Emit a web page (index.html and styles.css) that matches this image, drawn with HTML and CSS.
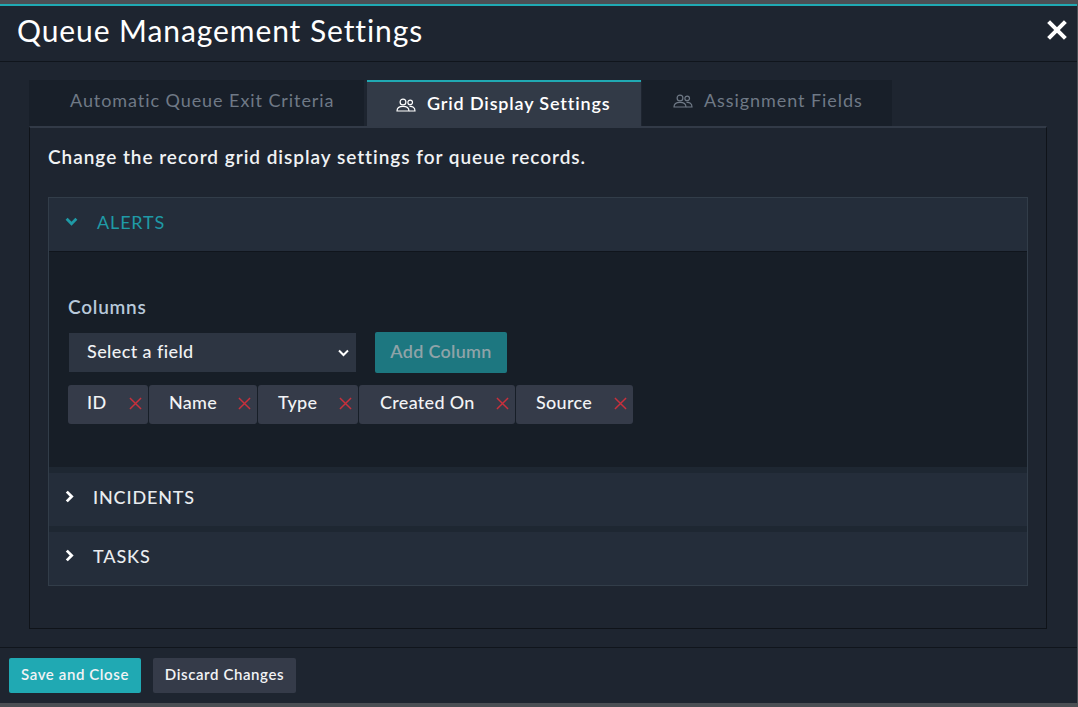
FILE: index.html

```html
<!DOCTYPE html>
<html lang="en">
<head>
    <meta charset="UTF-8">
    <title>Queue Management Settings</title>
    <link rel="stylesheet" href="styles.css">
</head>
<body>
    <div class="modal">
        <div class="modal_header">
            <h1>Queue Management Settings</h1>
            <svg class="close_icon" viewBox="0 0 20 20">
                <path d="M3 3 L17 17 M17 3 L3 17"/>
            </svg>
        </div>
        <div class="modal_body">
            <div class="tabs">
                <div class="tab tab_first">Automatic Queue Exit Criteria</div>
                <div class="tab tab_active">
                    <svg class="people_icon" viewBox="0 0 20 14">
                        <circle cx="7" cy="4" r="2.9"/>
                        <circle cx="14.2" cy="4.4" r="2.3"/>
                        <path d="M1 13 C1 9.5 3.5 8.4 7 8.4 C10.5 8.4 13 9.5 13 13 Z"/>
                        <path d="M13.5 8.4 C16.5 8.2 19 9.4 19 13 L13.2 13"/>
                    </svg>
                    Grid Display Settings
                </div>
                <div class="tab tab_last">
                    <svg class="people_icon" viewBox="0 0 20 14">
                        <circle cx="7" cy="4" r="2.9"/>
                        <circle cx="14.2" cy="4.4" r="2.3"/>
                        <path d="M1 13 C1 9.5 3.5 8.4 7 8.4 C10.5 8.4 13 9.5 13 13 Z"/>
                        <path d="M13.5 8.4 C16.5 8.2 19 9.4 19 13 L13.2 13"/>
                    </svg>
                    Assignment Fields
                </div>
            </div>
            <div class="tab_panel">
                <p class="intro">Change the record grid display settings for queue records.</p>
                <div class="accordion">
                    <div class="acc_head acc_open">
                        <svg class="chevron" viewBox="0 0 12 12"><path d="M1.5 3.5 L6 8 L10.5 3.5"/></svg>
                        ALERTS
                    </div>
                    <div class="acc_body">
                        <div class="field_label">Columns</div>
                        <div class="field_row">
                            <div class="select_box">
                                Select a field
                                <svg class="select_arrow" viewBox="0 0 12 8"><path d="M1.5 1.5 L6 6 L10.5 1.5"/></svg>
                            </div>
                            <button class="add_btn">Add Column</button>
                        </div>
                        <div class="chips">
                            <div class="chip chip_id">ID<svg class="remove" viewBox="0 0 14 14"><path d="M1 1 L13 13 M13 1 L1 13"/></svg></div>
                            <div class="chip chip_name">Name<svg class="remove" viewBox="0 0 14 14"><path d="M1 1 L13 13 M13 1 L1 13"/></svg></div>
                            <div class="chip chip_type">Type<svg class="remove" viewBox="0 0 14 14"><path d="M1 1 L13 13 M13 1 L1 13"/></svg></div>
                            <div class="chip chip_created">Created On<svg class="remove" viewBox="0 0 14 14"><path d="M1 1 L13 13 M13 1 L1 13"/></svg></div>
                            <div class="chip chip_source">Source<svg class="remove" viewBox="0 0 14 14"><path d="M1 1 L13 13 M13 1 L1 13"/></svg></div>
                        </div>
                    </div>
                    <div class="acc_head acc_closed">
                        <svg class="chevron" viewBox="0 0 12 12"><path d="M3.5 1.5 L8 6 L3.5 10.5"/></svg>
                        INCIDENTS
                    </div>
                    <div class="acc_head acc_closed">
                        <svg class="chevron" viewBox="0 0 12 12"><path d="M3.5 1.5 L8 6 L3.5 10.5"/></svg>
                        TASKS
                    </div>
                </div>
            </div>
        </div>
        <div class="modal_footer">
            <button class="btn btn_save">Save and Close</button>
            <button class="btn btn_discard">Discard Changes</button>
        </div>
    </div>
</body>
</html>
```

FILE: styles.css

```css
html, body {
    margin: 0;
    height: 100%;
}
body {
    background-color: #4b4f54;
    font-family: 'Lato', sans-serif;
    overflow: hidden;
    padding: 4px 1px 4px 0;
    box-sizing: border-box;
}
.modal {
    height: 699px;
    box-sizing: border-box;
    border-top: 2px solid #20a9b3;
    background-color: #1e2530;
    display: flex;
    flex-direction: column;
}
.modal_header {
    height: 55px;
    border-bottom: 1px solid #10151c;
    padding: 0 8px 0 17px;
    display: flex;
    align-items: center;
    justify-content: space-between;
}
h1 {
    margin: 0 0 7px;
    color: #fff;
    font-size: 30px;
    font-weight: 400;
    letter-spacing: 0.92px;
}
.close_icon {
    width: 24px;
    height: 24px;
    margin-bottom: 7px;
    fill: none;
    stroke: #fff;
    stroke-width: 3.4;
}
.modal_body {
    flex: 1;
    padding: 18px 30px 0 29px;
}
.tabs {
    display: flex;
    height: 46px;
    font-size: 18px;
    letter-spacing: 0.93px;
}
.tab {
    box-sizing: border-box;
    display: flex;
    align-items: center;
    background-color: #181f29;
    color: #6f7986;
}
.tab_first {
    width: 335px;
    padding: 0 0 6px 41px;
    margin-right: 3px;
}
.tab_active {
    width: 274px;
    padding: 0 0 5px 29px;
    border-top: 2px solid #20a9b3;
    background-color: #323a47;
    color: #fff;
    font-weight: 600;
    letter-spacing: 0.85px;
    height: 48px;
}
.tab_last {
    width: 250px;
    padding: 0 0 6px 31px;
    margin-left: 1px;
}
.people_icon {
    width: 20px;
    height: 14px;
    margin-top: 2px;
    margin-right: 11px;
    fill: none;
    stroke: currentColor;
    stroke-width: 1.2;
}
.tab_active .people_icon {
    margin-top: 4px;
}
.tab_panel {
    box-sizing: border-box;
    height: 503px;
    border: 1px solid #0f1319;
    border-top: 2px solid #323a47;
    padding: 0 18px;
}
.intro {
    margin: 18px 0 29px;
    color: #f0f2f4;
    font-size: 19px;
    font-weight: 600;
    line-height: 22px;
    letter-spacing: 0.97px;
}
.accordion {
    border: 1px solid #323d49;
    background-color: #1e2732;
}
.acc_head {
    box-sizing: border-box;
    display: flex;
    align-items: center;
    height: 53px;
    padding: 0 0 6px 16px;
    background-color: #242d3a;
    color: #e9ecef;
    font-size: 18px;
    font-weight: 500;
    letter-spacing: 0.85px;
}
.acc_open {
    color: #1f9aa6;
    font-weight: 400;
    border-bottom: 1px solid #10151c;
    height: 54px;
}
.acc_closed {
    padding-left: 14px;
}
.acc_closed + .acc_closed {
    margin-top: 6px;
}
.chevron {
    width: 13px;
    height: 13px;
    margin-right: 17px;
    fill: none;
    stroke: currentColor;
    stroke-width: 2.6;
}
.acc_open .chevron {
    margin-right: 19px;
}
.acc_closed .chevron {
    stroke: #fff;
    margin-right: 17px;
}
.acc_body {
    box-sizing: border-box;
    height: 215px;
    margin-bottom: 6px;
    padding: 44px 19px 0;
    background-color: #171e27;
}
.field_label {
    color: #b8c9da;
    font-size: 19px;
    font-weight: 600;
    line-height: 22px;
    letter-spacing: 0.75px;
}
.field_row {
    display: flex;
    align-items: center;
    margin-top: 14px;
}
.select_box {
    box-sizing: border-box;
    display: flex;
    align-items: center;
    justify-content: space-between;
    width: 287px;
    height: 39px;
    margin-left: 1px;
    padding: 0 6px 4px 18px;
    background-color: #2d3542;
    color: #f0f2f4;
    font-size: 18px;
    font-weight: 500;
    letter-spacing: 0.4px;
}
.select_arrow {
    width: 13px;
    height: 8px;
    margin-top: 4px;
    fill: none;
    stroke: #fff;
    stroke-width: 2;
}
.add_btn {
    width: 132px;
    height: 41px;
    margin-left: 19px;
    padding: 0 0 4px;
    border: 0;
    border-radius: 2px;
    background-color: #1d7780;
    color: #8fa3a8;
    font-family: 'Lato', sans-serif;
    font-size: 18px;
    font-weight: 600;
    letter-spacing: 0.3px;
}
.chips {
    display: flex;
    gap: 1px;
    margin-top: 12px;
}
.chip {
    box-sizing: border-box;
    display: flex;
    align-items: center;
    justify-content: space-between;
    height: 39px;
    padding: 0 6px 5px 20px;
    border-radius: 3px;
    background-color: #353b49;
    color: #f2f3f5;
    font-size: 18px;
    font-weight: 500;
    letter-spacing: 0.3px;
}
.chip_id { width: 80px; padding-left: 19px; }
.chip_name { width: 108px; }
.chip_type { width: 100px; }
.chip_created { width: 156px; padding-left: 21px; }
.chip_source { width: 117px; }
.remove {
    width: 13px;
    height: 13px;
    margin-top: 3px;
    fill: none;
    stroke: #c9303c;
    stroke-width: 1.6;
}
.modal_footer {
    height: 56px;
    box-sizing: border-box;
    border-top: 1px solid #10151c;
    padding: 10px 9px 0;
    display: flex;
    align-items: flex-start;
    gap: 12px;
}
.btn {
    height: 35px;
    border: 0;
    border-radius: 2px;
    color: #f2f3f5;
    font-family: 'Lato', sans-serif;
    font-size: 15px;
    font-weight: 600;
    letter-spacing: 0.6px;
    padding: 0 0 4px;
}
.btn_save {
    width: 132px;
    background-color: #20a9b3;
}
.btn_discard {
    width: 143px;
    background-color: #353b49;
}
```
